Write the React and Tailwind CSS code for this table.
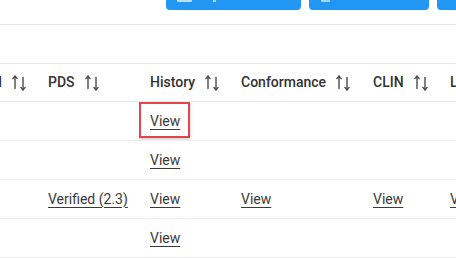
import React from "react";

function SortIcon() {
  return (
    <svg width="15" height="16" viewBox="0 0 15 16" fill="none" stroke="#4a4a4a" strokeWidth="1.4" strokeLinecap="round" strokeLinejoin="round" className="shrink-0">
      <path d="M3 13.5V1" />
      <path d="M0.8 3.6L3 1.2L5.2 3.6" />
      <path d="M11 2.5V15" />
      <path d="M8.8 12.4L11 14.8L13.2 12.4" />
    </svg>
  );
}

const cols = [
  { key: "c1", w: "w-[37px]", label: "UOM", first: true },
  { key: "pds", w: "w-[102px]", label: "PDS" },
  { key: "hist", w: "w-[91px]", label: "History" },
  { key: "conf", w: "w-[132px]", label: "Conformance" },
  { key: "clin", w: "w-[77px]", label: "CLIN" },
  { key: "loc", w: "w-[120px]", label: "Location" },
];

const rows = [
  { hist: "View", boxed: true },
  { hist: "View" },
  { pds: "Verified (2.3)", hist: "View", conf: "View", clin: "View", loc: "View" },
  { hist: "View" },
];

function Link({ children }) {
  return <a className="underline underline-offset-[3px] decoration-[1px] text-[#3a3a3a] cursor-pointer">{children}</a>;
}

export default function App() {
  return (
    <div className="w-[456px] h-[258px] overflow-hidden bg-white text-[#3a3a3a]" style={{ fontFamily: "Roboto, 'Liberation Sans', sans-serif" }}>
      {/* toolbar */}
      <div className="h-[25px] border-b border-[#e6e6e6] flex items-start gap-[8px] pl-[166px] overflow-hidden">
        <div className="shrink-0 w-[135px] h-[10px] bg-[#2196f3] rounded-b-[4px] flex items-start pl-[11px]">
          <span className="w-[15px] h-[2px] bg-white/70 rounded-b-[1px]" />
          <span className="ml-[21px] w-[3px] h-[2px] bg-white/60" />
        </div>
        <div className="shrink-0 w-[120px] h-[10px] bg-[#2196f3] rounded-b-[4px] flex items-start pl-[12px]">
          <span className="w-[9px] h-[2px] bg-white/60 rounded-b-[1px]" />
        </div>
        <div className="shrink-0 w-[60px] h-[10px] bg-[#2196f3] rounded-bl-[4px]" />
      </div>
      <div className="h-[38px]" />
      {/* table */}
      <div className="border-t border-[#e9e9e9]">
        <div className="flex h-[38px] border-b border-[#e9e9e9] whitespace-nowrap">
          {cols.map((c) => (
            <div key={c.key} className={`${c.w} shrink-0 flex items-center overflow-hidden ${c.first ? "justify-end pr-[10px]" : "pl-[11px]"}`}>
              <span className="text-[14px] font-medium text-[#333]">{c.label}</span>
              <span className="ml-[10px] flex"><SortIcon /></span>
            </div>
          ))}
        </div>
        {rows.map((r, i) => (
          <div key={i} className="flex h-[39px] border-b border-[#ececec] whitespace-nowrap text-[14px]">
            {cols.map((c) => (
              <div key={c.key} className={`${c.w} shrink-0 flex items-center overflow-hidden ${c.first ? "" : "pl-[11px]"}`}>
                {r[c.key] ? (
                  c.key === "hist" && r.boxed ? (
                    <span className="relative inline-flex">
                      <Link>{r[c.key]}</Link>
                      <span className="absolute left-[-11px] right-[-10px] top-[-9px] bottom-[-6px] border-2 border-[#e0464c] shadow-[0_1px_3px_rgba(0,0,0,0.25)] pointer-events-none" />
                    </span>
                  ) : (
                    <Link>{r[c.key]}</Link>
                  )
                ) : null}
              </div>
            ))}
          </div>
        ))}
      </div>
    </div>
  );
}
